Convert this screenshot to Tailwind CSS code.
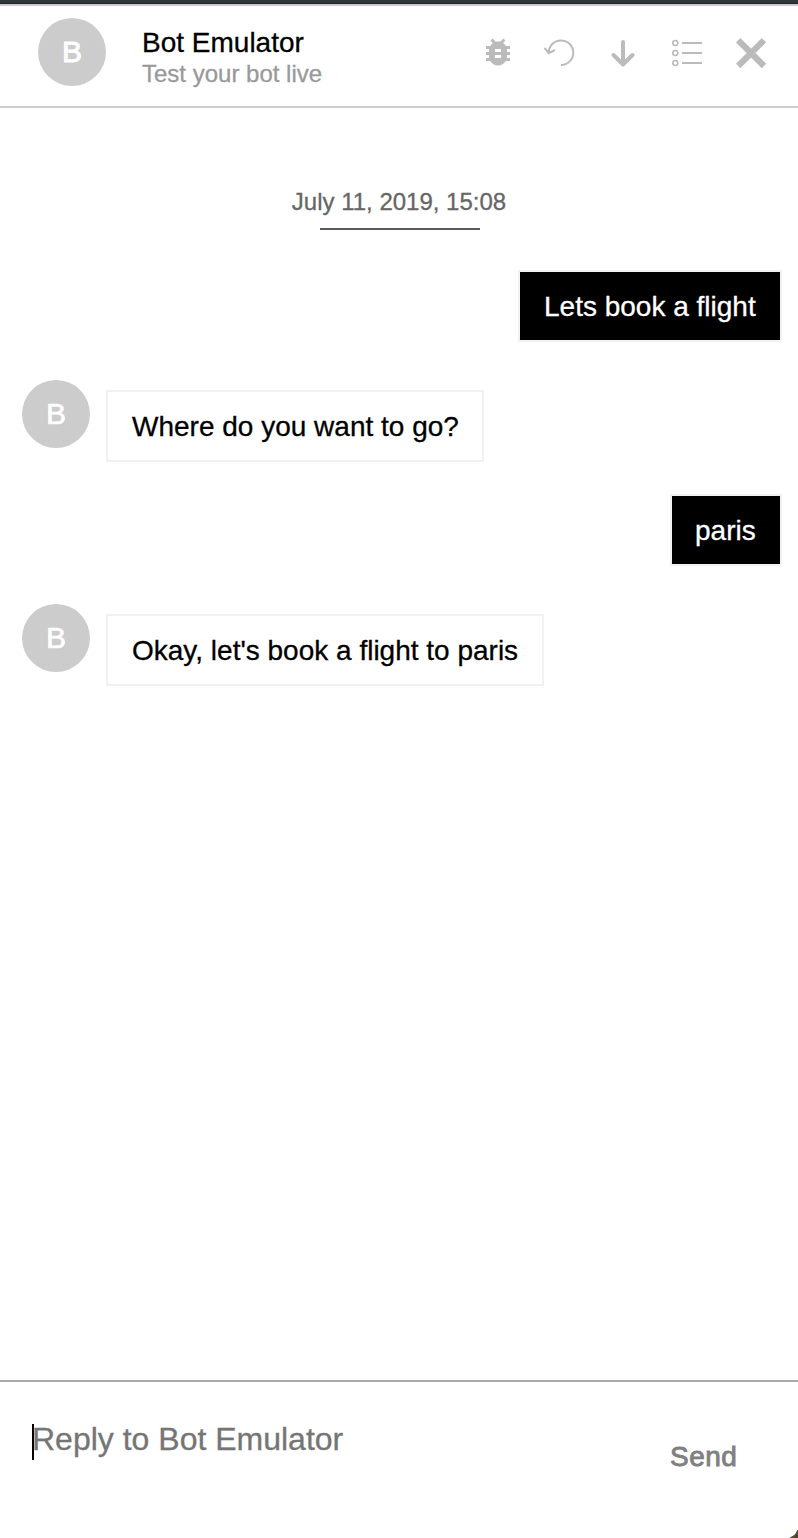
<!DOCTYPE html>
<html lang="en">
<head>
<meta charset="utf-8">
<title>Bot Emulator</title>
<script src="https://cdn.jsdelivr.net/npm/@tailwindcss/browser@4"></script>
</head>
<body class="relative flex h-[1538px] w-[798px] flex-col overflow-hidden bg-white font-['Liberation_Sans',Arial,sans-serif] text-[28px] leading-[32px] text-black [-webkit-text-stroke:0.3px]">
  <div class="h-1 shrink-0 border-b border-[#1f2226] bg-[#30343b]"></div>
  <header class="flex h-[104px] shrink-0 items-start border-y-2 border-[#ccc] pl-[38px]">
    <div class="mt-3 flex size-[68px] items-center justify-center rounded-full bg-[#ccc] text-[30px] text-white [-webkit-text-stroke:1px_white]">B</div>
    <div class="ml-9 mt-[21px] w-[340px]">
      <h1>Bot Emulator</h1>
      <p class="text-2xl leading-[30px] text-[#999]">Test your bot live</p>
    </div>
    <div class="mt-[14px] flex text-[#bbb]">
      <!-- debug, restart, jump down, options, close -->
      <svg class="h-16 w-8" viewBox="0 0 32 64" fill="currentColor">
        <path transform="translate(-2 14) scale(1.5)" d="M20 8h-2.81c-.45-.78-1.07-1.45-1.82-1.96L17 4.41 15.59 3l-2.17 2.17C12.96 5.06 12.49 5 12 5c-.49 0-.96.06-1.41.17L8.41 3 7 4.41l1.62 1.63C7.88 6.55 7.26 7.22 6.81 8H4v2h2.09c-.05.33-.09.66-.09 1v1H4v2h2v1c0 .34.04.67.09 1H4v2h2.81c1.04 1.79 2.97 3 5.19 3s4.15-1.21 5.19-3H20v-2h-2.09c.05-.33.09-.66.09-1v-1h2v-2h-2v-1c0-.34-.04-.67-.09-1H20V8zm-6 8h-4v-2h4v2zm0-4h-4v-2h4v2z"/>
      </svg>
      <svg class="h-16 w-16" viewBox="514 20 64 64" fill="none" stroke="currentColor" stroke-width="2">
        <path d="M561 65A12.3 12.3 0 1 0 548.7 52.7M544.5 47.8L548.7 53.2L554.8 50"/>
      </svg>
      <svg class="h-16 w-16" viewBox="578 20 64 64" fill="none" stroke="currentColor" stroke-width="4" stroke-linecap="round" stroke-linejoin="round">
        <path d="M623 42V64.5M613.5 55L623 64.5L632.5 55"/>
      </svg>
      <svg class="h-16 w-16" viewBox="642 20 64 64" fill="none" stroke="currentColor" stroke-width="1.6">
        <circle cx="675.3" cy="43" r="2.5"/><circle cx="675.3" cy="53" r="2.5"/><circle cx="675.3" cy="63" r="2.5"/>
        <path stroke-width="2" d="M682 43H702M682 53H702M682 63H702"/>
      </svg>
      <svg class="h-16 w-16" viewBox="706 20 64 64" fill="none" stroke="currentColor" stroke-width="6.2">
        <path d="M738.2 40.2L764 66M764 40.2L738.2 66"/>
      </svg>
    </div>
  </header>

  <main class="flex flex-1 flex-col">
    <div class="mt-[78px] flex flex-col items-center">
      <time class="text-2xl leading-8 text-[#666]">July 11, 2019, 15:08</time>
      <div class="ml-0.5 mt-[10px] h-0.5 w-40 bg-[#58595b]"></div>
    </div>
    <div class="mt-10 flex justify-end pr-4">
      <p class="w-[264px] whitespace-nowrap border-2 border-[#f1f1f1] bg-black pb-[17px] pl-6 pt-[19px] text-white">Lets book a flight</p>
    </div>
    <div class="mt-[38px] flex pl-[22px]">
      <div class="flex size-[68px] items-center justify-center rounded-full bg-[#ccc] text-[30px] text-white [-webkit-text-stroke:0.6px_white]">B</div>
      <p class="ml-4 mt-[10px] w-[378px] whitespace-nowrap border-2 border-[#f1f1f1] pb-[17px] pl-6 pt-[19px]">Where do you want to go?</p>
    </div>
    <div class="mt-8 flex justify-end pr-4">
      <p class="w-[112px] whitespace-nowrap border-2 border-[#f1f1f1] bg-black pb-[17px] pl-[23px] pt-[19px] text-white">paris</p>
    </div>
    <div class="mt-[38px] flex pl-[22px]">
      <div class="flex size-[68px] items-center justify-center rounded-full bg-[#ccc] text-[30px] text-white [-webkit-text-stroke:0.6px_white]">B</div>
      <p class="ml-4 mt-[10px] w-[438px] whitespace-nowrap border-2 border-[#f1f1f1] pb-[17px] pl-6 pt-[19px]">Okay, let's book a flight to paris</p>
    </div>
  </main>

  <footer class="flex h-[158px] shrink-0 items-start border-t-2 border-[#a9a9a9] pl-8">
    <div class="mt-[42px] h-9 w-0.5 bg-black"></div>
    <p class="-ml-0.5 mt-[39px] w-[638px] text-[32px] leading-9 text-[#757575]">Reply to Bot Emulator</p>
    <button class="mt-[59px] leading-8 tracking-[0.5px] text-[#808080] [-webkit-text-stroke:0.9px_#808080]">Send</button>
  </footer>
  <svg class="absolute bottom-0 right-0 size-[10px]" viewBox="0 0 10 10">
    <path fill="#593c10" stroke="#4b5560" stroke-width="1" d="M10 2Q8 8 2 10H10Z"/>
  </svg>
</body>
</html>
